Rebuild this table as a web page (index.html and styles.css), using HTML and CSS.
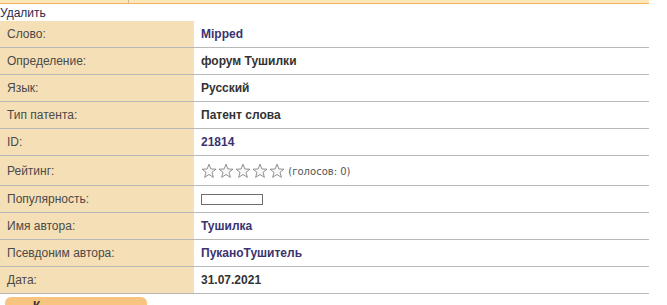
FILE: index.html
```html
<!DOCTYPE html>
<html>
<head>
<meta charset="utf-8">
<link rel="stylesheet" href="styles.css">
</head>
<body>
<div class="topbar"><span class="tabsep"></span></div>
<div class="actions"><a class="del" href="#">Удалить</a></div>
<table class="info">
  <tr><td class="lbl">Слово:</td><td class="val link">Mipped</td></tr>
  <tr><td class="lbl">Определение:</td><td class="val">форум Тушилки</td></tr>
  <tr><td class="lbl">Язык:</td><td class="val">Русский</td></tr>
  <tr><td class="lbl">Тип патента:</td><td class="val">Патент слова</td></tr>
  <tr><td class="lbl">ID:</td><td class="val link">21814</td></tr>
  <tr class="tall"><td class="lbl">Рейтинг:</td><td class="val rating">
    <span class="stars">
      <svg class="star" viewBox="0 0 16 16"><path d="M8 1.2 L9.9 6 L15 6.2 L11 9.3 L12.4 14.4 L8 11.5 L3.6 14.4 L5 9.3 L1 6.2 L6.1 6 Z"/></svg>
      <svg class="star" viewBox="0 0 16 16"><path d="M8 1.2 L9.9 6 L15 6.2 L11 9.3 L12.4 14.4 L8 11.5 L3.6 14.4 L5 9.3 L1 6.2 L6.1 6 Z"/></svg>
      <svg class="star" viewBox="0 0 16 16"><path d="M8 1.2 L9.9 6 L15 6.2 L11 9.3 L12.4 14.4 L8 11.5 L3.6 14.4 L5 9.3 L1 6.2 L6.1 6 Z"/></svg>
      <svg class="star" viewBox="0 0 16 16"><path d="M8 1.2 L9.9 6 L15 6.2 L11 9.3 L12.4 14.4 L8 11.5 L3.6 14.4 L5 9.3 L1 6.2 L6.1 6 Z"/></svg>
      <svg class="star" viewBox="0 0 16 16"><path d="M8 1.2 L9.9 6 L15 6.2 L11 9.3 L12.4 14.4 L8 11.5 L3.6 14.4 L5 9.3 L1 6.2 L6.1 6 Z"/></svg>
    </span>
    <span class="votes">(голосов: 0)</span>
  </td></tr>
  <tr><td class="lbl">Популярность:</td><td class="val"><div class="popbar"></div></td></tr>
  <tr><td class="lbl">Имя автора:</td><td class="val link">Тушилка</td></tr>
  <tr><td class="lbl">Псевдоним автора:</td><td class="val link">ПуканоТушитель</td></tr>
  <tr><td class="lbl">Дата:</td><td class="val">31.07.2021</td></tr>
</table>
<div class="bottom"><div class="btn">К</div></div>
</body>
</html>
```
FILE: styles.css
```css
html, body {
  margin: 0;
  padding: 0;
  background: #fff;
  font-family: "Liberation Sans", Arial, sans-serif;
  font-size: 12px;
  color: #333;
  overflow: hidden;
}
.topbar {
  position: relative;
  width: 649px;
  height: 3px;
  background: #fde6b8;
  border-bottom: 1px solid #f3b45a;
}
.tabsep {
  position: absolute;
  left: 128px;
  top: 0;
  width: 1px;
  height: 3px;
  background: #c9b89a;
}
.actions {
  height: 17px;
  line-height: 18px;
}
.del {
  color: #2b2b4a;
  text-decoration: none;
  font-size: 12px;
}
.info {
  width: 649px;
  border-collapse: collapse;
}
.info td {
  height: 26px;
  padding: 0 7px;
  border-bottom: 1px solid #b8b8b8;
  vertical-align: middle;
}
.info tr.tall td {
  height: 29px;
}
.lbl {
  width: 180px;
  background: #f5dfb6;
  color: #4a4a4a;
  font-size: 12px;
}
.val {
  font-family: "Liberation Sans", Arial, sans-serif;
  font-size: 12px;
  font-weight: bold;
  color: #333;
}
.val.link {
  color: #3a3370;
}
.rating {
  font-weight: normal;
}
.stars {
  display: inline-flex;
  vertical-align: middle;
  gap: 1px;
}
.star {
  width: 16px;
  height: 16px;
  fill: #f8f8f8;
  stroke: #858585;
  stroke-width: 0.9;
  stroke-linejoin: round;
}
.votes {
  font-family: "DejaVu Sans", Verdana, sans-serif;
  font-size: 10px;
  color: #555;
  vertical-align: middle;
}
.popbar {
  width: 60px;
  height: 9px;
  border: 1px solid #6e6e6e;
  background: #fff;
}
.bottom {
  padding: 3px 0 0 5px;
}
.btn {
  width: 142px;
  height: 20px;
  background: #f7c580;
  border-radius: 6px 6px 0 0;
  padding-left: 28px;
  box-sizing: border-box;
  font-weight: bold;
  font-size: 12px;
  line-height: 18px;
  color: #333;
}
```
